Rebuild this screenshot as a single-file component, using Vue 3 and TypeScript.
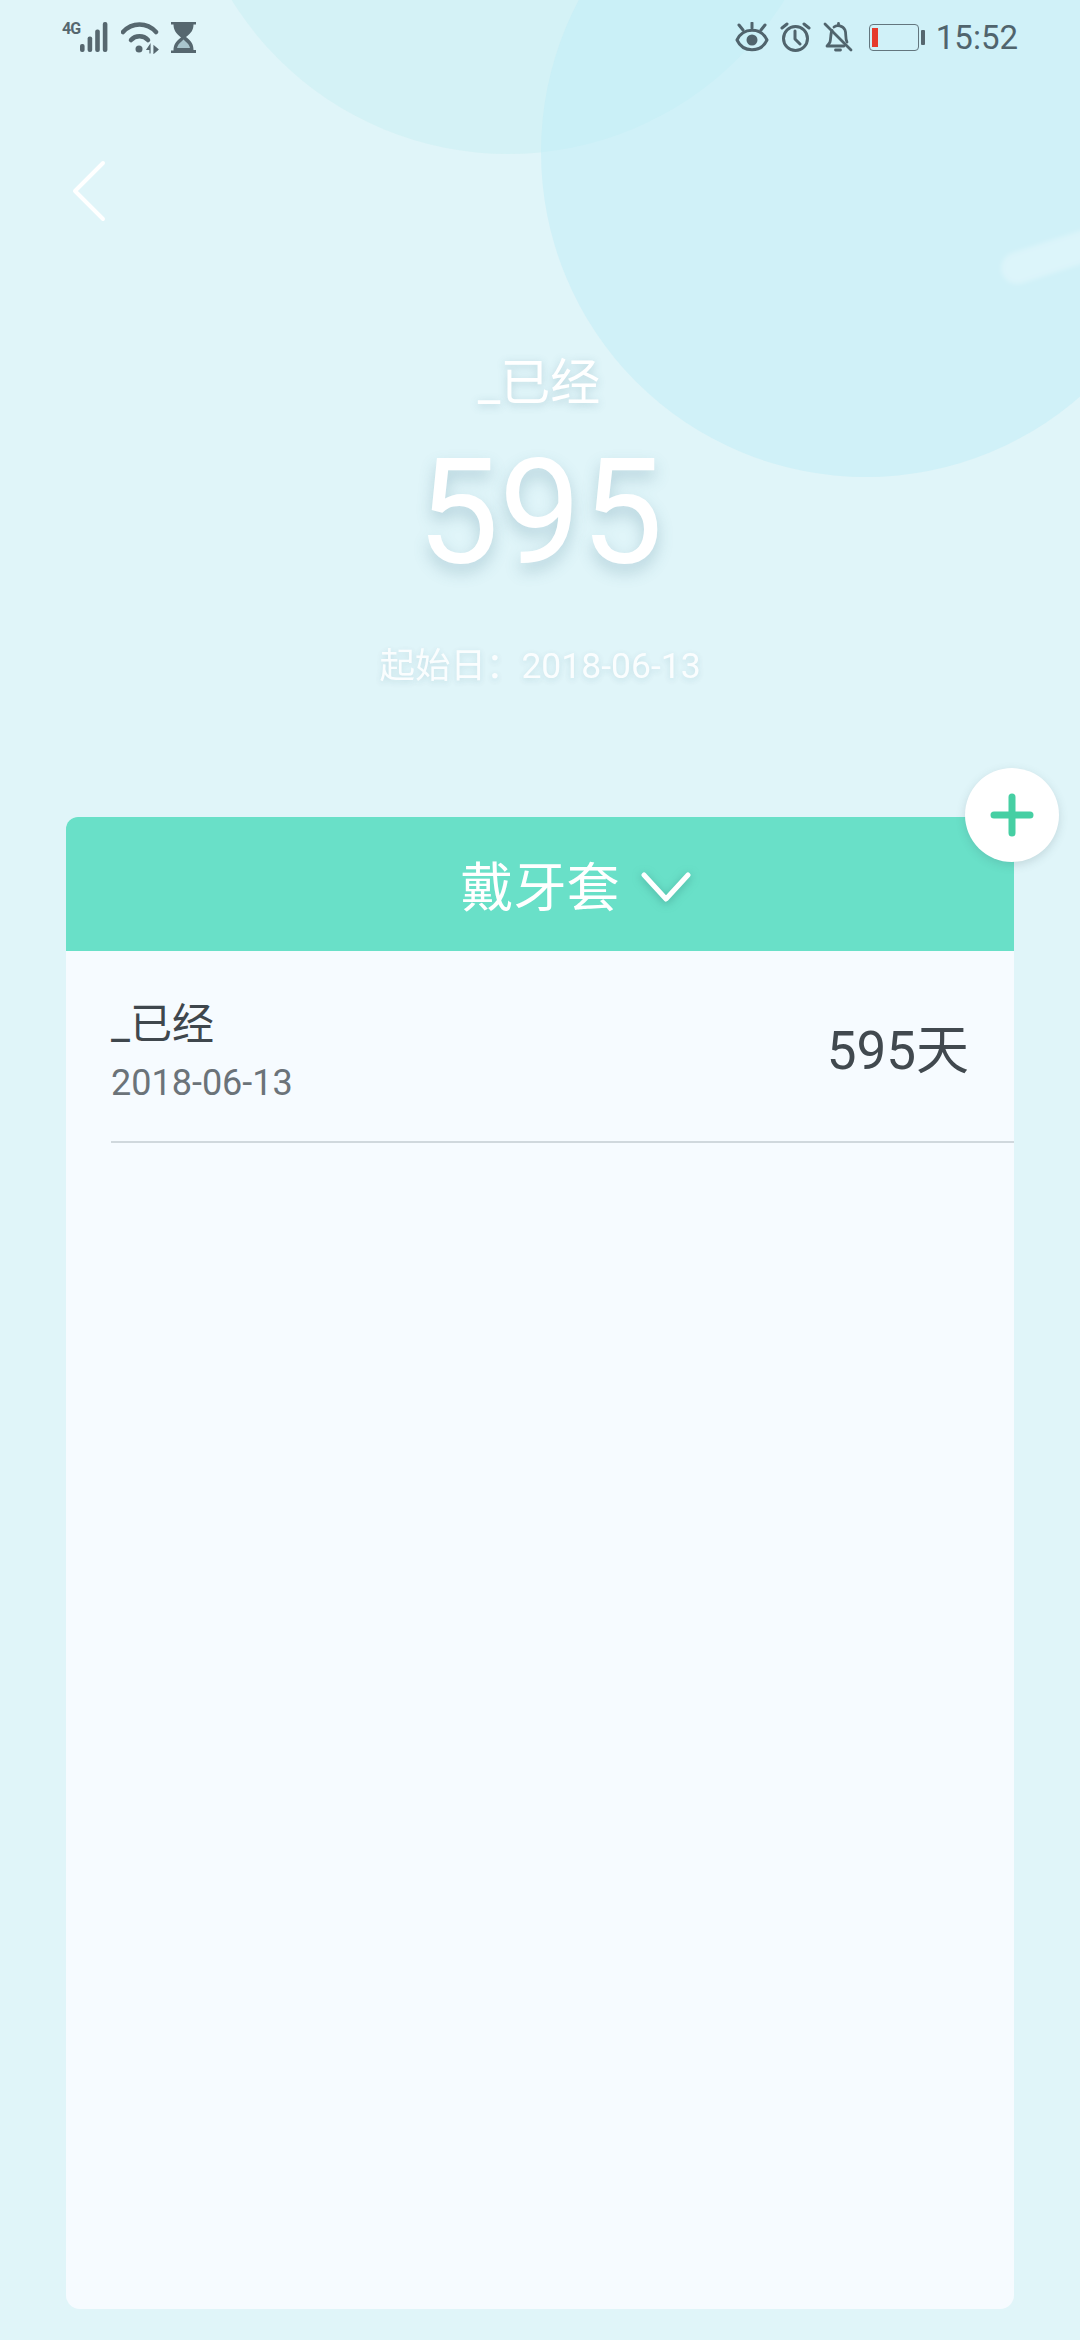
<script setup lang="ts">
const signalBars = [
  { x: 0, y: 22, h: 8 },
  { x: 7.6, y: 14.5, h: 15.5 },
  { x: 15.2, y: 7.5, h: 22.5 },
  { x: 22.8, y: 0, h: 30 },
]
</script>

<template>
  <div class="page">
    <div class="circle circle_small"></div>
    <div class="circle circle_big"></div>
    <div class="streak"></div>

    <div class="status_bar">
      <div class="status_left">
        <span class="net">4G</span>
        <svg class="signal" width="31" height="31" viewBox="0 0 31 31">
          <rect v-for="bar in signalBars" :key="bar.x" :x="bar.x" :y="bar.y" width="4.6" :height="bar.h" rx="2"
            fill="#56676f" />
        </svg>
        <svg class="wifi" width="38" height="32" viewBox="0 0 38 32" fill="none" stroke="#56676f" stroke-width="4.500"
          stroke-linecap="round">
          <path d="M2 10C11 0 26 0 35 10" />
          <path d="M10 18C14.500 13 22.500 13 27 18" />
          <circle cx="18" cy="27" r="3.500" fill="#56676f" stroke="none" />
          <path d="M29 23l-3 4.500h3zM29 23v8M33 24v7l4-3.500z" fill="#56676f" stroke-width="1.200" />
        </svg>
        <svg class="hourglass" width="25" height="31" viewBox="0 0 25 31">
          <path d="M0 0h25v2.500h-2.500c0 5-2 8.500-7.500 12.500 5.500 4 7.500 7.500 7.500 13H25V31H0v-2.500h2.500c0-5.500 2-9 7.500-13C4.500 11 2.500 7.500 2.500 2.500H0z"
            fill="#56676f" />
          <path d="M10.500 19.500c-2.500 2-4 4-4.500 6.500h13c-.5-2.500-2-4.500-4.500-6.500l-2-2z" fill="#cdeef5" opacity="0.700" />
        </svg>
      </div>
      <div class="status_right">
        <svg width="34" height="30" viewBox="0 0 34 30" fill="none" stroke="#50646d" stroke-width="3"
          stroke-linecap="round" stroke-linejoin="round">
          <path d="M2 18C8 5 26 5 32 18 26 31 8 31 2 18z" />
          <circle cx="17" cy="18" r="5.500" fill="#50646d" stroke="none" />
          <path d="M17 1v5M4 3l4 5M30 3l-4 5" />
        </svg>
        <svg class="alarm" width="31" height="30" viewBox="0 0 31 30" fill="none" stroke="#50646d" stroke-width="3"
          stroke-linecap="round" stroke-linejoin="round">
          <circle cx="15.500" cy="16.500" r="12" />
          <path d="M15 9v8l5 5M2 6l5-4M29 6l-5-4" />
        </svg>
        <svg class="bell" width="30" height="31" viewBox="0 0 30 31" fill="none" stroke="#50646d" stroke-width="2.800"
          stroke-linecap="round" stroke-linejoin="round">
          <path d="M9 8.500C7.500 11 8 17 7 20c-.5 1.500-2 2.500-3 4h17" />
          <path d="M11 5c3-2.500 9-1.500 11 3 1.500 3.500 0 9 2 12" />
          <path d="M15.500 1.500v2M12.500 28h5M2 2l26 26" />
        </svg>
        <div class="battery">
          <div class="battery_body"><div class="battery_level"></div></div>
          <div class="battery_nub"></div>
        </div>
        <span class="time">15:52</span>
      </div>
    </div>

    <button class="back">
      <svg width="36" height="62" viewBox="0 0 36 62" fill="none" stroke="#ffffff" stroke-width="4"
        stroke-linecap="round" stroke-linejoin="round">
        <path d="M32 3 4 31l28 28" />
      </svg>
    </button>

    <div class="hero">
      <p class="hero_title">_已经</p>
      <p class="hero_days">595</p>
      <p class="hero_date">起始日：2018-06-13</p>
    </div>

    <div class="card">
      <button class="add">
        <svg width="44" height="44" viewBox="0 0 44 44" fill="none" stroke="#46cfa3" stroke-width="7"
          stroke-linecap="round">
          <path d="M22 4v36M4 22h36" />
        </svg>
      </button>
      <div class="card_header">
        <span class="card_title">
          戴牙套
          <svg class="chevron" width="52" height="36" viewBox="0 0 52 36" fill="none" stroke="#ffffff"
            stroke-width="5" stroke-linecap="round" stroke-linejoin="round">
            <path d="M4 5l22 24L48 5" />
          </svg>
        </span>
      </div>
      <div class="row">
        <div class="row_left">
          <p class="row_title">_已经</p>
          <p class="row_date">2018-06-13</p>
        </div>
        <div class="row_days">595天</div>
      </div>
    </div>
  </div>
</template>

<style scoped>
p {
  margin: 0;
}

button {
  border: none;
  padding: 0;
  background: none;
}

.page {
  position: relative;
  width: 1080px;
  height: 2340px;
  overflow: hidden;
  background-color: #e0f5f9;
  font-family: Roboto, "Noto Sans CJK SC", sans-serif;
  display: flex;
  flex-direction: column;
}

.circle {
  position: absolute;
  width: 650px;
  height: 650px;
  border-radius: 50%;
}

.circle_small {
  left: 183px;
  top: -496px;
  background-color: rgba(186, 236, 240, 0.3);
}

.circle_big {
  left: 541px;
  top: -173px;
  background-color: rgba(191, 238, 248, 0.5);
}

.streak {
  position: absolute;
  left: 1002px;
  top: 257px;
  width: 120px;
  height: 32px;
  border-radius: 16px;
  background-color: rgba(255, 255, 255, 0.25);
  transform: rotate(-18deg);
  transform-origin: left center;
  filter: blur(2px);
}

.status_bar {
  position: relative;
  height: 76px;
  display: flex;
  justify-content: space-between;
  padding: 22px 62px 0 62px;
  box-sizing: border-box;
}

.status_left,
.status_right {
  display: flex;
  align-items: flex-start;
}

.net {
  font-size: 16px;
  line-height: 14px;
  font-weight: 700;
  letter-spacing: -1px;
  color: #56676f;
  width: 19px;
}

.signal {
  margin-left: -1px;
}

.wifi {
  margin-left: 10px;
}

.hourglass {
  margin-left: 12px;
}

.alarm {
  margin-left: 11px;
}

.bell {
  margin-left: 12px;
}

.battery {
  display: flex;
  align-items: center;
  margin-left: 16px;
  margin-top: 2px;
}

.battery_body {
  width: 50px;
  height: 27px;
  box-sizing: border-box;
  border: 1.500px solid #63767e;
  border-radius: 4px;
  padding: 3px 2px;
}

.battery_level {
  width: 6px;
  height: 100%;
  background-color: #e53b2c;
}

.battery_nub {
  width: 4px;
  height: 15px;
  margin-left: 2px;
  background-color: #56676f;
  border-radius: 1px;
}

.time {
  margin-left: 11px;
  font-size: 33px;
  line-height: 32px;
  color: #50646d;
}

.back {
  position: relative;
  align-self: flex-start;
  display: flex;
  margin: 84px 0 0 71px;
}

.hero {
  position: relative;
  display: flex;
  flex-direction: column;
  align-items: center;
  color: #ffffff;
}

.hero_title {
  margin-top: 131px;
  font-size: 50px;
  line-height: 60px;
  margin-right: 2px;
  text-shadow: 0 2px 8px rgba(80, 130, 150, 0.3);
}

.hero_days {
  margin-top: 16px;
  font-size: 146px;
  line-height: 170px;
  font-weight: 400;
  text-shadow: 0 8px 16px rgba(80, 130, 150, 0.3);
}

.hero_date {
  margin-top: 45px;
  font-size: 35.5px;
  line-height: 44px;
  opacity: 0.85;
  text-shadow: 0 2px 6px rgba(80, 130, 150, 0.25);
}

.card {
  position: relative;
  margin: 0 66px;
  margin-top: 129px;
  height: 1492px;
  display: flex;
  flex-direction: column;
  background-color: #f6fbff;
  border-radius: 12px 12px 14px 14px;
}

.add {
  position: absolute;
  right: -45px;
  top: -49px;
  width: 94px;
  height: 94px;
  border-radius: 50%;
  background-color: #ffffff;
  box-shadow: 0 3px 10px rgba(60, 90, 100, 0.18);
  display: flex;
  align-items: center;
  justify-content: center;
}

.card_header {
  height: 134px;
  background-color: #69e0c8;
  border-radius: 12px 12px 0 0;
  display: flex;
  align-items: center;
  justify-content: center;
  color: #ffffff;
  font-size: 53px;
}

.card_title {
  position: relative;
}

.chevron {
  position: absolute;
  left: calc(100% + 20px);
  top: 24px;
  filter: drop-shadow(0 2px 4px rgba(50, 130, 120, 0.5));
}

.row {
  margin-left: 45px;
  height: 192px;
  box-sizing: border-box;
  border-bottom: 2px solid #d0d8dd;
  padding-right: 45px;
  display: flex;
  align-items: center;
  justify-content: space-between;
}

.row_left {
  padding-top: 11px;
}

.row_title {
  font-size: 42px;
  line-height: 52px;
  color: #3f474d;
}

.row_date {
  margin-top: 10px;
  font-size: 36px;
  line-height: 44px;
  color: #6b7379;
}

.row_days {
  font-size: 53px;
  color: #41494f;
}
</style>
